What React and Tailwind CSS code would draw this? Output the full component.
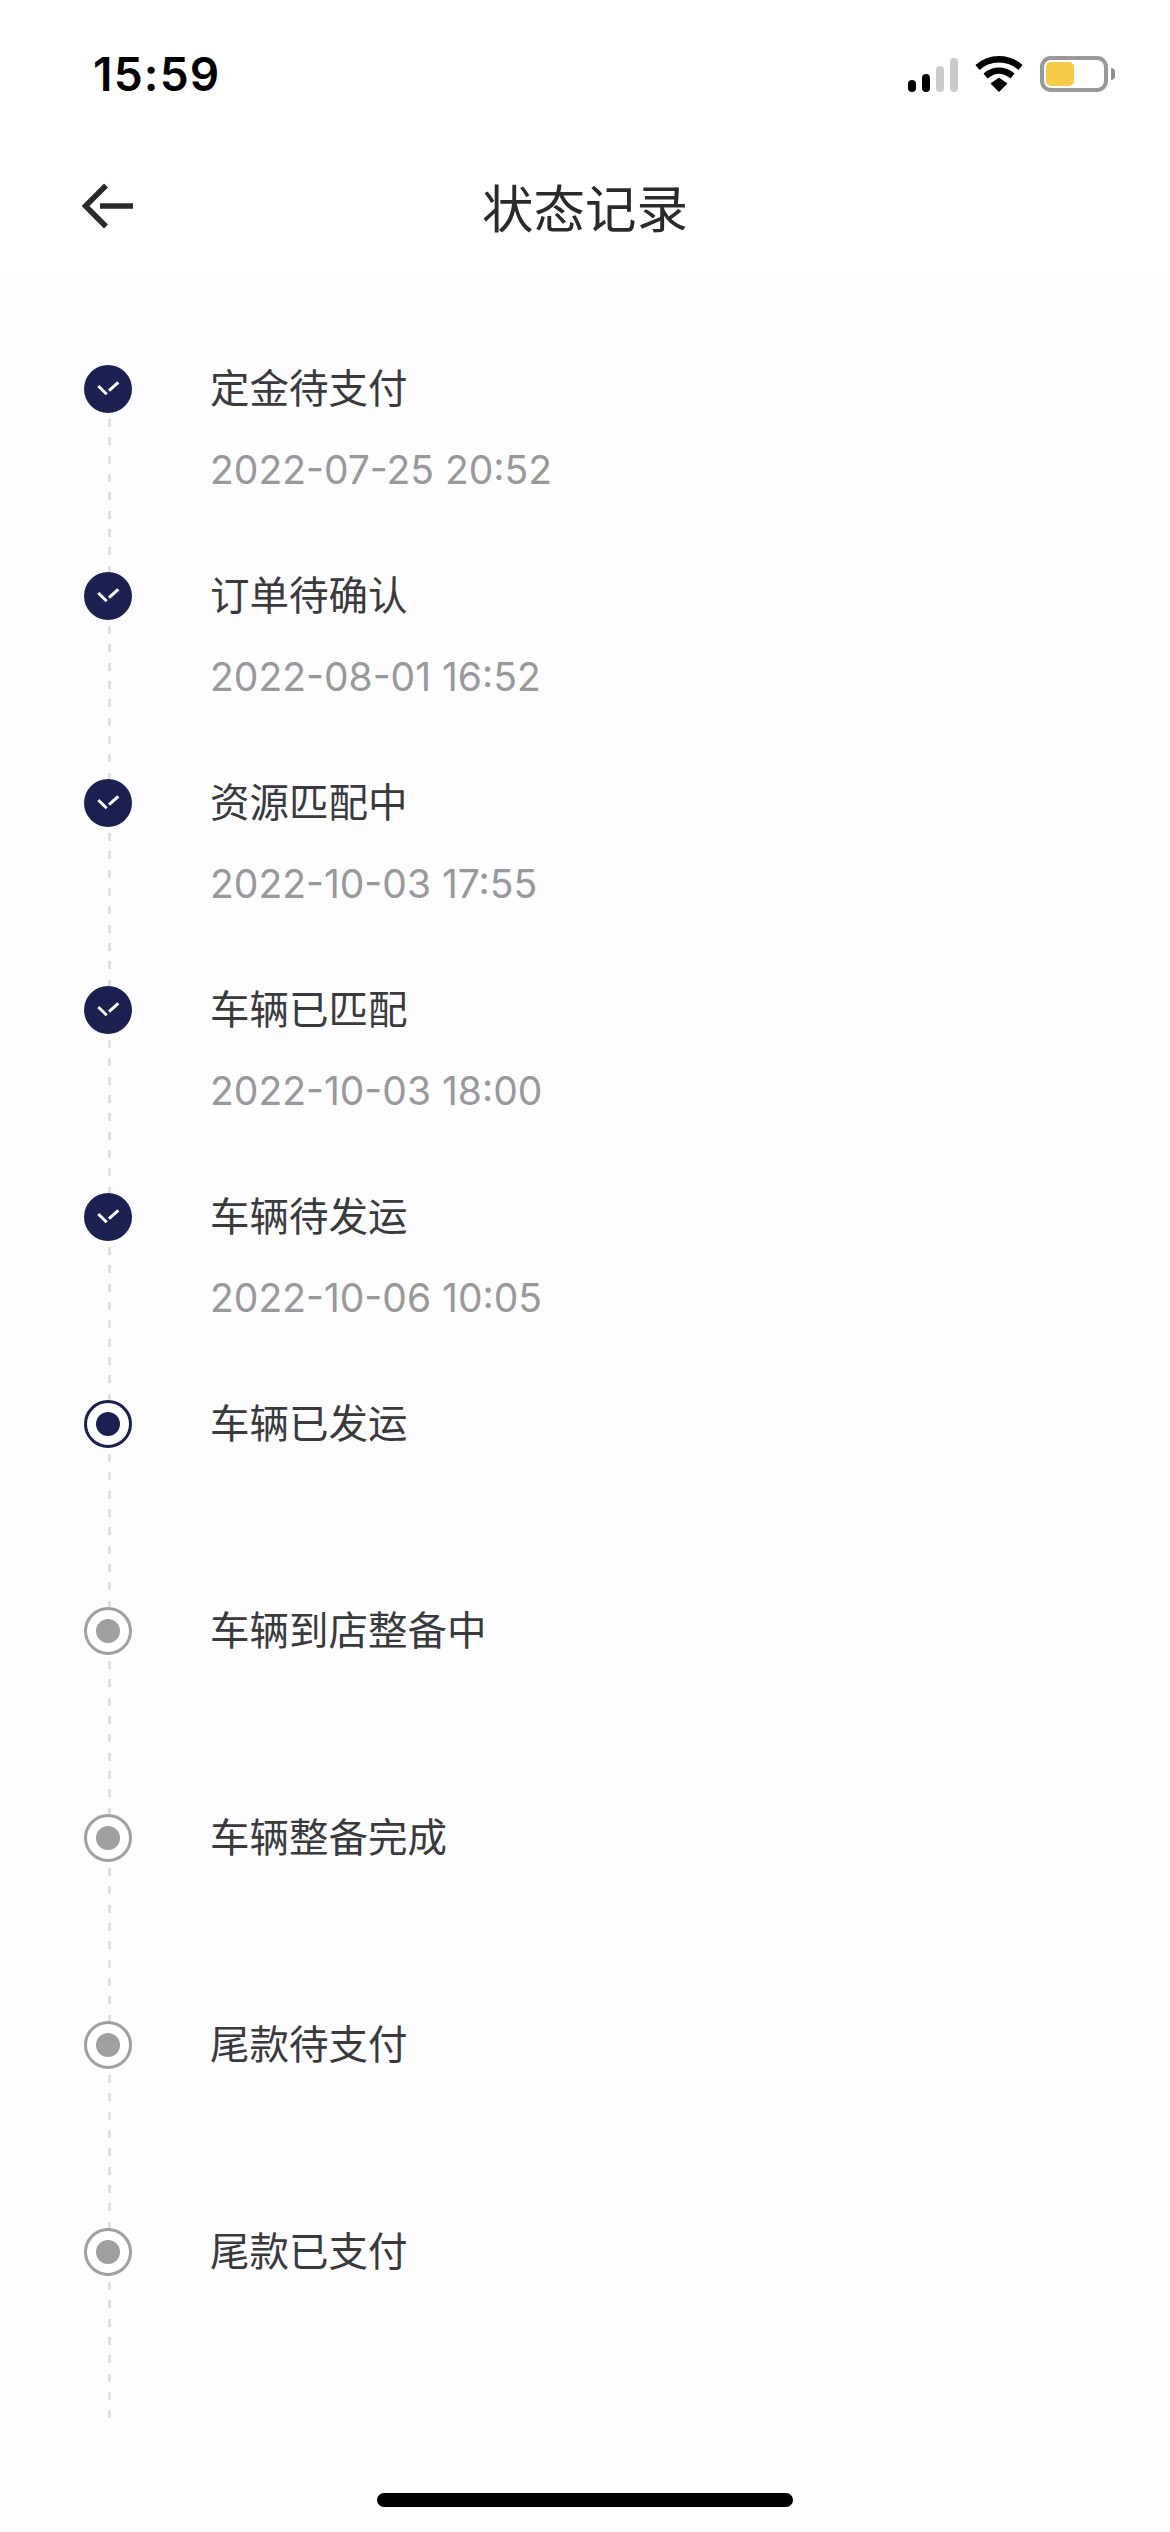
const rows = [
  ["定金待支付", "2022-07-25 20:52", "done"],
  ["订单待确认", "2022-08-01 16:52", "done"],
  ["资源匹配中", "2022-10-03 17:55", "done"],
  ["车辆已匹配", "2022-10-03 18:00", "done"],
  ["车辆待发运", "2022-10-06 10:05", "done"],
  ["车辆已发运", "", "active"],
  ["车辆到店整备中", "", "todo"],
  ["车辆整备完成", "", "todo"],
  ["尾款待支付", "", "todo"],
  ["尾款已支付", "", "todo"],
];

function Node({ state }) {
  if (state === "done") {
    return (
      <div className="flex h-12 w-12 shrink-0 items-center justify-center rounded-full bg-[#1c2050]">
        <svg width="48" height="48" viewBox="0 0 48 48" fill="none" stroke="#ffffff" strokeWidth="3">
          <path d="M14.3 21L22.7 29.3" />
          <path d="M25 25.7L34.3 17.3" />
        </svg>
      </div>
    );
  }
  const ring = state === "active" ? "border-[#1c2050]" : "border-[#a0a0a0]";
  const dot = state === "active" ? "bg-[#1c2050]" : "bg-[#a0a0a0]";
  return (
    <div className={`flex h-12 w-12 shrink-0 items-center justify-center rounded-full border-[3px] bg-white ${ring}`}>
      <div className={`h-6 w-6 rounded-full ${dot}`} />
    </div>
  );
}

function Row({ title, date, state, last }) {
  return (
    <div className="flex h-[207px] gap-[78px]">
      <div className="flex w-12 shrink-0 flex-col">
        <Node state={state} />
        <div className={`ml-[24px] w-[3px] flex-1 bg-[repeating-linear-gradient(to_bottom,transparent_0,transparent_6px,#dfdfe4_6px,#dfdfe4_14px,transparent_14px,transparent_18.33px)] ${last ? "mb-[9px]" : ""}`} />
      </div>
      <div className="flex flex-col">
        <div className="h-12 text-[39.5px] leading-[48px] text-[#3a3a3c]">{title}</div>
        {date ? <div className="mt-[33px] h-12 text-[39px] leading-[48px] text-[#999999]">{date}</div> : null}
      </div>
    </div>
  );
}

export default function App() {
  return (
    <div className="flex h-[2532px] w-[1170px] flex-col overflow-hidden bg-white font-['Inter','Noto_Sans_CJK_SC',sans-serif]">
      <div className="flex h-[148px] shrink-0 items-center justify-between pl-[93px] pr-[55px]">
        <span className="text-[46px] font-semibold leading-none tracking-[1.2px] text-black">15:59</span>
        <div className="flex items-center gap-[17px]">
          <div className="flex h-9 items-end gap-[5.5px]">
            <div className="h-3 w-[8.5px] rounded-full bg-black" />
            <div className="h-[18px] w-[8.5px] rounded-full bg-black" />
            <div className="h-[26px] w-[8.5px] rounded-sm bg-[#cbcbcb]" />
            <div className="h-[34px] w-[8.5px] rounded-sm bg-[#cbcbcb]" />
          </div>
          <svg width="48" height="36" viewBox="0 0 48 36" fill="none" stroke="#000000" strokeWidth="6.5">
            <path d="M2.5 11.5C15 0.5 33 0.5 45.5 11.5" />
            <path d="M10.5 20C19 13 29 13 37.5 20" />
            <path d="M15.5 27.5L24 21.5L32.5 27.5L24 36Z" fill="#000000" stroke="none" />
          </svg>
          <div className="flex items-center gap-[3px]">
            <div className="flex h-9 w-[68px] items-center rounded-[11px] border-4 border-[#999999] px-[2px]">
              <div className="h-6 w-7 rounded-[5px] bg-[#f7cb4a]" />
            </div>
            <div className="h-3 w-1 rounded-r-sm bg-[#8f8f8f]" />
          </div>
        </div>
      </div>
      <div className="relative flex h-[124px] shrink-0 items-center justify-center">
        <svg className="absolute left-[80px] top-[33px]" width="56" height="50" viewBox="0 0 56 50" fill="none" stroke="#2a2a2a" strokeWidth="5.5">
          <path d="M26 4.5L5.5 25L26 45.5" strokeLinejoin="miter" />
          <path d="M20 25H53" />
        </svg>
        <h1 className="text-[51.5px] font-normal leading-none text-[#2a2a2a]">状态记录</h1>
      </div>
      <div className="relative flex-1 bg-[#fdfdff] pl-[84px] pt-[93px]">
        {rows.map((r, i) => (
          <Row key={r[0]} title={r[0]} date={r[1]} state={r[2]} last={i === rows.length - 1} />
        ))}
        <div className="absolute bottom-[25px] left-[377px] h-[14px] w-[416px] rounded-full bg-black" />
      </div>
    </div>
  );
}
